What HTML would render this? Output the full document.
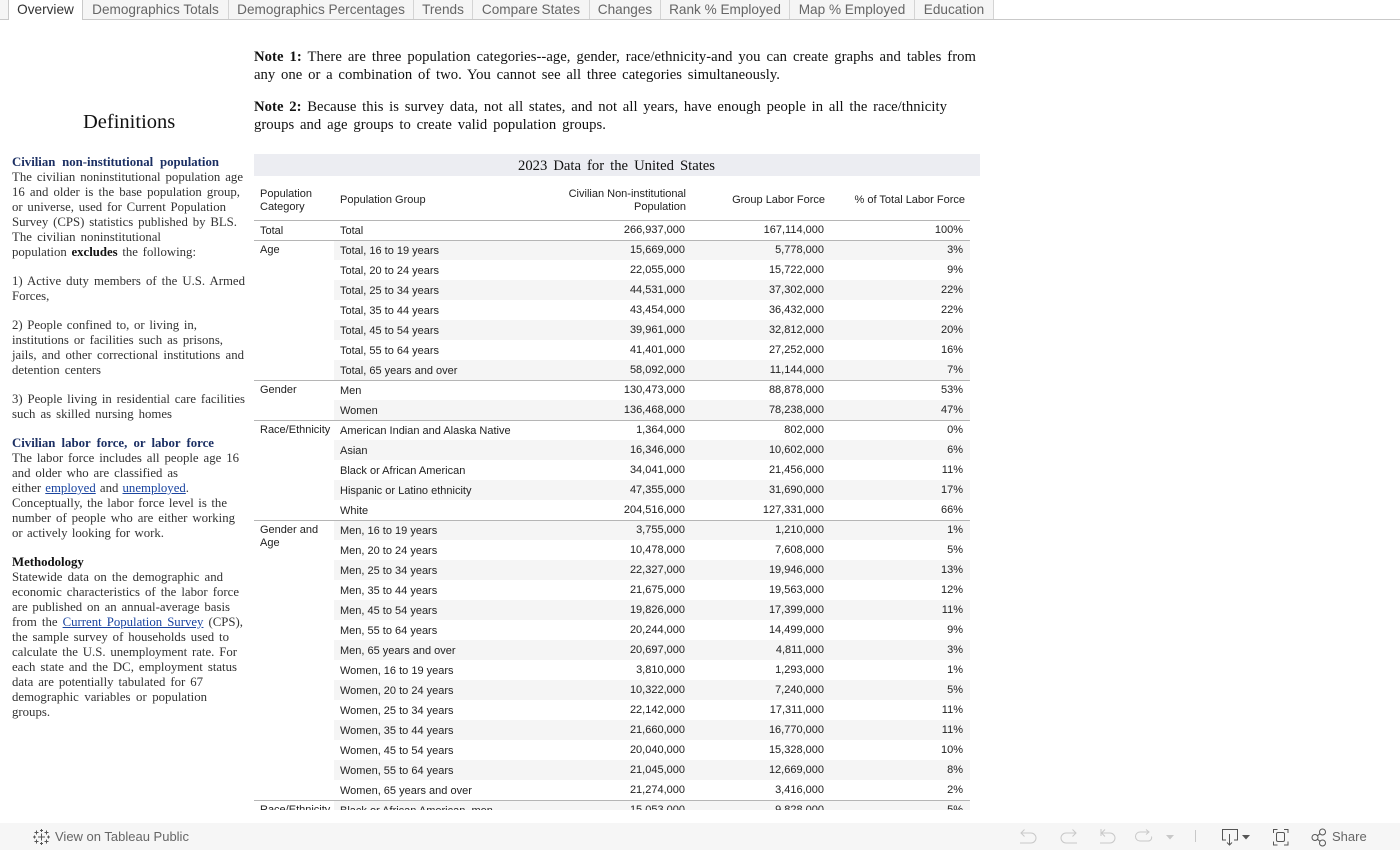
<!DOCTYPE html>
<html><head><meta charset="utf-8"><title>Overview</title>
<style>
html,body{margin:0;padding:0;width:1400px;height:850px;overflow:hidden;background:#fff}
body{position:relative;font-family:"Liberation Sans",sans-serif}
#tabs{position:absolute;left:0;top:0;width:1400px;height:19px;background:#fff;border-bottom:1px solid #c9c9c9}
.t{position:absolute;top:0;height:19px;line-height:19px;font-size:13.6px;color:#666;background:#f5f5f5;border-right:1px solid #d4d4d4;text-align:center;box-sizing:border-box}
.s{position:absolute;font-family:"Liberation Serif",serif;white-space:normal;text-align:justify;text-align-last:justify}
.l{font-size:12.8px;line-height:15px;height:15px;left:12px;color:#333;margin-top:1px}
.n{font-size:14.67px;line-height:18px;height:18px;left:254px;color:#111;letter-spacing:.05px}
.h{color:#1b2f63;font-weight:bold}
a{color:#1a44a0;text-decoration:underline}
#tb{position:absolute;left:254px;top:180px;width:726px;height:630px;overflow:hidden;font-size:11px;color:#222}
.r{position:absolute;left:0;width:716px;height:20px;line-height:20px}
.r i{position:absolute;left:80px;top:0;width:636px;height:20px;background:#f5f5f5}
.r b,.r u,.r em,.r span{font-weight:normal;font-style:normal;text-decoration:none;position:absolute;white-space:nowrap}
.r span{left:86px;top:1px}
.r u{right:285px;top:0}
.r b{right:146px;top:0}
.r em{right:7px;top:0}
.c{position:absolute;left:6px;line-height:13px;white-space:nowrap;margin-top:1px}
.ln{position:absolute;left:0;width:716px;height:1px;background:#b5b5b5}
.hd{position:absolute;line-height:13px;text-align:right;white-space:nowrap;margin-top:1px}
#ft{position:absolute;left:0;top:823px;width:1400px;height:27px;background:#f6f6f6}
#ft span{position:absolute;font-size:13px;color:#666;line-height:27px;top:0}
</style></head><body>
<div id="tabs">
<div class="t" style="left:0;width:9px;border-right:1px solid #c9c9c9"></div>
<div class="t" style="left:9px;width:74px;background:#fff;color:#333;height:20px;border-right:1px solid #c9c9c9">Overview</div>
<div class="t" style="left:83px;width:146px">Demographics Totals</div>
<div class="t" style="left:229px;width:185px">Demographics Percentages</div>
<div class="t" style="left:414px;width:59px">Trends</div>
<div class="t" style="left:473px;width:117px">Compare States</div>
<div class="t" style="left:590px;width:71px">Changes</div>
<div class="t" style="left:661px;width:129px">Rank % Employed</div>
<div class="t" style="left:790px;width:125px">Map % Employed</div>
<div class="t" style="left:915px;width:79px">Education</div>
</div>

<div class="s n" style="top:48px;width:722px"><b>Note 1:</b> There are three population categories--age, gender, race/ethnicity-and you can create graphs and tables from</div>
<div class="s n" style="top:66px;width:526px">any one or a combination of two. You cannot see all three categories simultaneously.</div>
<div class="s n" style="top:98px;width:693px"><b>Note 2:</b> Because this is survey data, not all states, and not all years, have enough people in all the race/thnicity</div>
<div class="s n" style="top:116px;width:352px">groups and age groups to create valid population groups.</div>

<div class="s" style="left:83px;top:109px;font-size:20.5px;line-height:26px;color:#111;text-align:left;text-align-last:left">Definitions</div>

<div class="s l h" style="top:154px;width:207px">Civilian non-institutional population</div>
<div class="s l" style="top:169px;width:231px">The civilian noninstitutional population age</div>
<div class="s l" style="top:184px;width:228px">16 and older is the base population group,</div>
<div class="s l" style="top:199px;width:214px">or universe, used for Current Population</div>
<div class="s l" style="top:214px;width:225px">Survey (CPS) statistics published by BLS.</div>
<div class="s l" style="top:229px;width:149px">The civilian noninstitutional</div>
<div class="s l" style="top:244px;width:184px">population <b style="color:#111">excludes</b> the following:</div>
<div class="s l" style="top:273px;width:233px">1) Active duty members of the U.S. Armed</div>
<div class="s l" style="top:288px;width:37px">Forces,</div>
<div class="s l" style="top:317px;width:185px">2) People confined to, or living in,</div>
<div class="s l" style="top:332px;width:211px">institutions or facilities such as prisons,</div>
<div class="s l" style="top:347px;width:232px">jails, and other correctional institutions and</div>
<div class="s l" style="top:362px;width:89px">detention centers</div>
<div class="s l" style="top:391px;width:233px">3) People living in residential care facilities</div>
<div class="s l" style="top:406px;width:160px">such as skilled nursing homes</div>
<div class="s l h" style="top:435px;width:202px">Civilian labor force, or labor force</div>
<div class="s l" style="top:450px;width:227px">The labor force includes all people age 16</div>
<div class="s l" style="top:465px;width:166px">and older who are classified as</div>
<div class="s l" style="top:480px;width:177px">either <a>employed</a> and <a>unemployed</a>.</div>
<div class="s l" style="top:495px;width:215px">Conceptually, the labor force level is the</div>
<div class="s l" style="top:510px;width:223px">number of people who are either working</div>
<div class="s l" style="top:525px;width:152px">or actively looking for work.</div>
<div class="s l" style="top:554px;width:72px;color:#111;font-weight:bold">Methodology</div>
<div class="s l" style="top:569px;width:211px">Statewide data on the demographic and</div>
<div class="s l" style="top:584px;width:227px">economic characteristics of the labor force</div>
<div class="s l" style="top:599px;width:218px">are published on an annual-average basis</div>
<div class="s l" style="top:614px;width:231px">from the <a>Current Population Survey</a> (CPS),</div>
<div class="s l" style="top:629px;width:217px">the sample survey of households used to</div>
<div class="s l" style="top:644px;width:225px">calculate the U.S. unemployment rate. For</div>
<div class="s l" style="top:659px;width:225px">each state and the DC, employment status</div>
<div class="s l" style="top:674px;width:191px">data are potentially tabulated for 67</div>
<div class="s l" style="top:689px;width:195px">demographic variables or population</div>
<div class="s l" style="top:704px;width:38px">groups.</div>

<div style="position:absolute;left:254px;top:154px;width:726px;height:22px;background:#ecedf2"></div>
<div class="s" style="left:518px;top:157px;width:197px;font-size:14.67px;line-height:18px;color:#111">2023 Data for the United States</div>

<div id="tb">
<div class="hd" style="left:6px;top:7px;text-align:left">Population<br>Category</div>
<div class="hd" style="left:86px;top:13px;text-align:left">Population Group</div>
<div class="hd" style="right:294px;top:7px">Civilian Non-institutional<br>Population</div>
<div class="hd" style="right:155px;top:13px">Group Labor Force</div>
<div class="hd" style="right:15px;top:13px">% of Total Labor Force</div>
<div class="ln" style="top:40px"></div>

<div class="r" style="top:40px"><span>Total</span><u>266,937,000</u><b>167,114,000</b><em>100%</em></div>
<div class="r" style="top:60px"><i></i><span>Total, 16 to 19 years</span><u>15,669,000</u><b>5,778,000</b><em>3%</em></div>
<div class="r" style="top:80px"><span>Total, 20 to 24 years</span><u>22,055,000</u><b>15,722,000</b><em>9%</em></div>
<div class="r" style="top:100px"><i></i><span>Total, 25 to 34 years</span><u>44,531,000</u><b>37,302,000</b><em>22%</em></div>
<div class="r" style="top:120px"><span>Total, 35 to 44 years</span><u>43,454,000</u><b>36,432,000</b><em>22%</em></div>
<div class="r" style="top:140px"><i></i><span>Total, 45 to 54 years</span><u>39,961,000</u><b>32,812,000</b><em>20%</em></div>
<div class="r" style="top:160px"><span>Total, 55 to 64 years</span><u>41,401,000</u><b>27,252,000</b><em>16%</em></div>
<div class="r" style="top:180px"><i></i><span>Total, 65 years and over</span><u>58,092,000</u><b>11,144,000</b><em>7%</em></div>
<div class="r" style="top:200px"><span>Men</span><u>130,473,000</u><b>88,878,000</b><em>53%</em></div>
<div class="r" style="top:220px"><i></i><span>Women</span><u>136,468,000</u><b>78,238,000</b><em>47%</em></div>
<div class="r" style="top:240px"><span>American Indian and Alaska Native</span><u>1,364,000</u><b>802,000</b><em>0%</em></div>
<div class="r" style="top:260px"><i></i><span>Asian</span><u>16,346,000</u><b>10,602,000</b><em>6%</em></div>
<div class="r" style="top:280px"><span>Black or African American</span><u>34,041,000</u><b>21,456,000</b><em>11%</em></div>
<div class="r" style="top:300px"><i></i><span>Hispanic or Latino ethnicity</span><u>47,355,000</u><b>31,690,000</b><em>17%</em></div>
<div class="r" style="top:320px"><span>White</span><u>204,516,000</u><b>127,331,000</b><em>66%</em></div>
<div class="r" style="top:340px"><i></i><span>Men, 16 to 19 years</span><u>3,755,000</u><b>1,210,000</b><em>1%</em></div>
<div class="r" style="top:360px"><span>Men, 20 to 24 years</span><u>10,478,000</u><b>7,608,000</b><em>5%</em></div>
<div class="r" style="top:380px"><i></i><span>Men, 25 to 34 years</span><u>22,327,000</u><b>19,946,000</b><em>13%</em></div>
<div class="r" style="top:400px"><span>Men, 35 to 44 years</span><u>21,675,000</u><b>19,563,000</b><em>12%</em></div>
<div class="r" style="top:420px"><i></i><span>Men, 45 to 54 years</span><u>19,826,000</u><b>17,399,000</b><em>11%</em></div>
<div class="r" style="top:440px"><span>Men, 55 to 64 years</span><u>20,244,000</u><b>14,499,000</b><em>9%</em></div>
<div class="r" style="top:460px"><i></i><span>Men, 65 years and over</span><u>20,697,000</u><b>4,811,000</b><em>3%</em></div>
<div class="r" style="top:480px"><span>Women, 16 to 19 years</span><u>3,810,000</u><b>1,293,000</b><em>1%</em></div>
<div class="r" style="top:500px"><i></i><span>Women, 20 to 24 years</span><u>10,322,000</u><b>7,240,000</b><em>5%</em></div>
<div class="r" style="top:520px"><span>Women, 25 to 34 years</span><u>22,142,000</u><b>17,311,000</b><em>11%</em></div>
<div class="r" style="top:540px"><i></i><span>Women, 35 to 44 years</span><u>21,660,000</u><b>16,770,000</b><em>11%</em></div>
<div class="r" style="top:560px"><span>Women, 45 to 54 years</span><u>20,040,000</u><b>15,328,000</b><em>10%</em></div>
<div class="r" style="top:580px"><i></i><span>Women, 55 to 64 years</span><u>21,045,000</u><b>12,669,000</b><em>8%</em></div>
<div class="r" style="top:600px"><span>Women, 65 years and over</span><u>21,274,000</u><b>3,416,000</b><em>2%</em></div>
<div class="r" style="top:620px"><i></i><span>Black or African American, men</span><u>15,053,000</u><b>9,828,000</b><em>5%</em></div>

<div class="ln" style="top:60px"></div>
<div class="ln" style="top:200px"></div>
<div class="ln" style="top:240px"></div>
<div class="ln" style="top:340px"></div>
<div class="ln" style="top:620px"></div>

<div class="c" style="top:44px">Total</div>
<div class="c" style="top:63px">Age</div>
<div class="c" style="top:203px">Gender</div>
<div class="c" style="top:243px">Race/Ethnicity</div>
<div class="c" style="top:343px">Gender and<br>Age</div>
<div class="c" style="top:623px">Race/Ethnicity</div>
</div>

<div id="ft">
<span style="left:55px">View on Tableau Public</span>
<span style="left:1332px;font-size:13px">Share</span>
<svg width="1400" height="27" viewBox="0 823 1400 27" style="position:absolute;left:0;top:0" fill="none">
<g stroke="#555" stroke-width="1">
<path d="M41.500 833.500v7M38 837h7"/>
<path d="M36.500 830.500v4M34.500 832.500h4M46.500 830.500v4M44.500 832.500h4M36.500 839.500v4M34.500 841.500h4M46.500 839.500v4M44.500 841.500h4"/>
<path d="M41.500 829v3M40 830.500h3M41.500 842v3M40 843.500h3M34.500 835.500v3M33 837h3M48.500 835.500v3M47 837h3"/>
</g>
<g stroke="#c8c8c8" stroke-width="1">
<path d="M1021 833h10a5 5 0 0 1 0 10h-11M1024.500 829.500l-3.500 3.500 3.500 3.500"/>
<path d="M1076 833h-10a5 5 0 0 0 0 10h11M1072.500 829.500l3.500 3.500-3.500 3.500"/>
<path d="M1101 829v7M1101 833h9a5 5 0 0 1 0 10h-10M1105 829.500l-3.500 3.500 3.500 3.500"/>
<path d="M1149 832h-9a3.500 3.500 0 0 0 0 9h8a3.500 3.500 0 0 0 3.500-4.500M1146 829.500l3 2.500-3 2.500"/>
<path d="M1195.500 830v12"/>
</g>
<path d="M1166 835h8l-4 4.500z" fill="#c8c8c8"/>
<g stroke="#555" stroke-width="1">
<path d="M1226 840h-3.500v-10.500h15v10.500h-3.500M1229.500 834v11M1227 842.500l2.500 2.500 2.500-2.500"/>
<path d="M1273.500 833v-3.500h4M1284 829.500h4v3.500M1288 841.500v3.500h-4M1277.500 845h-4v-3.500"/>
<rect x="1276.500" y="832.500" width="8" height="9" rx="1.500"/>
<circle cx="1315" cy="837.500" r="3"/><circle cx="1322.500" cy="832" r="3"/><circle cx="1322.500" cy="843" r="3"/>
<path d="M1317.500 835.700l2.500-2M1317.500 839.300l2.500 2"/>
</g>
<path d="M1242 835h8l-4 4.500z" fill="#555"/>
</svg>
</div>
</body></html>
